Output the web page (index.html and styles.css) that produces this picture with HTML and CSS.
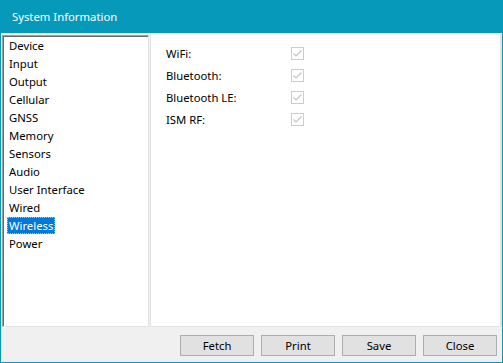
FILE: index.html
```html
<!DOCTYPE html>
<html>
<head>
<meta charset="utf-8">
<link rel="stylesheet" href="styles.css">
</head>
<body>
<div class="window">
  <div class="titlebar">System Information</div>
  <div class="body">
    <div class="split">
      <div class="list">
        <div class="item"><span>Device</span></div>
        <div class="item"><span>Input</span></div>
        <div class="item"><span>Output</span></div>
        <div class="item"><span>Cellular</span></div>
        <div class="item"><span>GNSS</span></div>
        <div class="item"><span>Memory</span></div>
        <div class="item"><span>Sensors</span></div>
        <div class="item"><span>Audio</span></div>
        <div class="item"><span>User Interface</span></div>
        <div class="item"><span>Wired</span></div>
        <div class="item selected"><span>Wireless</span></div>
        <div class="item"><span>Power</span></div>
      </div>
      <div class="panel">
        <div class="row"><span class="label">WiFi:</span><span class="check"><svg width="13" height="13" viewBox="0 0 13 13"><rect x="0.5" y="0.5" width="12" height="12" fill="#fff" stroke="#cccccc"/><path d="M2.5 6.5 L5 9 L10.5 3.5" fill="none" stroke="#c4c4c4" stroke-width="1.2"/></svg></span></div>
        <div class="row"><span class="label">Bluetooth:</span><span class="check"><svg width="13" height="13" viewBox="0 0 13 13"><rect x="0.5" y="0.5" width="12" height="12" fill="#fff" stroke="#cccccc"/><path d="M2.5 6.5 L5 9 L10.5 3.5" fill="none" stroke="#c4c4c4" stroke-width="1.2"/></svg></span></div>
        <div class="row"><span class="label">Bluetooth LE:</span><span class="check"><svg width="13" height="13" viewBox="0 0 13 13"><rect x="0.5" y="0.5" width="12" height="12" fill="#fff" stroke="#cccccc"/><path d="M2.5 6.5 L5 9 L10.5 3.5" fill="none" stroke="#c4c4c4" stroke-width="1.2"/></svg></span></div>
        <div class="row"><span class="label">ISM RF:</span><span class="check"><svg width="13" height="13" viewBox="0 0 13 13"><rect x="0.5" y="0.5" width="12" height="12" fill="#fff" stroke="#cccccc"/><path d="M2.5 6.5 L5 9 L10.5 3.5" fill="none" stroke="#c4c4c4" stroke-width="1.2"/></svg></span></div>
      </div>
    </div>
    <div class="footer">
      <button class="btn">Fetch</button>
      <button class="btn">Print</button>
      <button class="btn">Save</button>
      <button class="btn">Close</button>
    </div>
  </div>
</div>
</body>
</html>
```
FILE: styles.css
```css
html, body {
  margin: 0;
  padding: 0;
}
body {
  font-family: "Noto Sans", "Open Sans", sans-serif;
  font-size: 11.3px;
  color: #000;
}
.window {
  width: 503px;
  height: 363px;
  display: flex;
  flex-direction: column;
  background: #f0f0f0;
}
.titlebar {
  height: 33px;
  flex: none;
  background: #0799ba;
  color: #fff;
  display: flex;
  align-items: center;
  padding-left: 12px;
  font-size: 11.3px;
}
.body {
  flex: 1;
  display: flex;
  flex-direction: column;
  border: 1px solid #0799ba;
  border-top: none;
  min-height: 0;
}
.split {
  display: flex;
  height: 294px;
  flex: none;
}
.list {
  margin: 2px 0 0 1px;
  width: 147px;
  box-sizing: border-box;
  height: 292px;
  background: #fff;
  border-top: 1px solid #a0a0a0;
  border-left: 1px solid #a0a0a0;
  border-right: 1px solid #e3e3e3;
  border-bottom: 1px solid #e3e3e3;
  box-shadow: inset 1px 1px 0 #696969;
  padding: 1px 0 0 4px;
}
.item {
  height: 18px;
  line-height: 18px;
}
.item span {
  display: inline-block;
  padding: 0 2px;
  height: 17px;
  line-height: 17px;
}
.item.selected span {
  background: #0078d7;
  color: #fff;
  outline: 1px dotted #f0c040;
  outline-offset: -1px;
}
.panel {
  flex: 1;
  margin-left: 1px;
  background: #fff;
  border-left: 1px solid #e3e3e3;
  border-right: 2px solid #e3e3e3;
  border-bottom: 1px solid #e3e3e3;
  padding: 9px 0 0 15px;
}
.row {
  display: flex;
  align-items: center;
  height: 22px;
}
.label {
  width: 125px;
}
.check {
  display: flex;
}
.footer {
  display: flex;
  justify-content: flex-end;
  gap: 7px;
  padding: 8px 5px 0 0;
}
.btn {
  width: 74px;
  height: 21px;
  box-sizing: border-box;
  background: #e1e1e1;
  border: 1px solid #adadad;
  font-family: "Noto Sans", "Open Sans", sans-serif;
  font-size: 11.3px;
  color: #000;
  padding: 0;
  margin: 0;
}
```
